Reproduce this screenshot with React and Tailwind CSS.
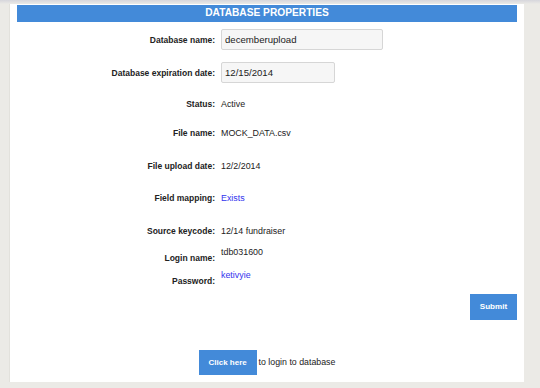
import React from 'react';

const rows = [
  { label: 'Status:', value: 'Active', mt: 'mt-[15px]' },
  { label: 'File name:', value: 'MOCK_DATA.csv', mt: 'mt-[17px]' },
  { label: 'File upload date:', value: '12/2/2014', mt: 'mt-[21px]' },
  { label: 'Field mapping:', value: 'Exists', link: true, mt: 'mt-[20px]' },
  { label: 'Source keycode:', value: '12/14 fundraiser', mt: 'mt-[21px]' },
];

const Label = ({ children, className = '' }) => (
  <div className={`w-[198px] shrink-0 text-right text-[8.5px] font-bold text-[#222] leading-[12px] ${className}`}>
    {children}
  </div>
);

export default function App() {
  return (
    <div className="w-[540px] h-[388px] bg-[#ebeae6] relative overflow-hidden font-['Liberation_Sans',Arial,sans-serif]">
      {/* top shadow strip */}
      <div className="absolute top-0 left-0 right-0 h-[4px] bg-gradient-to-b from-[#d6d6dc] to-[#ebeae6]" />

      <div className="ml-[9px] w-[515px] h-[382px] bg-white border-l border-[#e2e1dc] pt-[5px] px-[7px]">
        {/* Header */}
        <div className="h-[17px] bg-[#438ad9] flex items-center justify-center">
          <span className="text-white font-bold text-[10.2px] leading-none">DATABASE PROPERTIES</span>
        </div>

        {/* Inputs */}
        <div className="flex items-center gap-[6px] mt-[7px]">
          <Label>Database name:</Label>
          <input
            readOnly
            value="decemberupload"
            className="w-[162px] h-[21px] px-[3px] bg-[#f6f6f6] border border-[#d6d6d6] rounded-[2px] text-[9.6px] text-[#222] outline-none"
          />
        </div>
        <div className="flex items-center gap-[6px] mt-[12px]">
          <Label>Database expiration date:</Label>
          <input
            readOnly
            value="12/15/2014"
            className="w-[114px] h-[21px] px-[3px] bg-[#f6f6f6] border border-[#d6d6d6] rounded-[2px] text-[9.6px] text-[#222] outline-none"
          />
        </div>

        {/* Plain rows */}
        {rows.map((r) => (
          <div key={r.label} className={`flex items-center gap-[6px] ${r.mt}`}>
            <Label>{r.label}</Label>
            <span className={`text-[8.9px] leading-[12px] ${r.link ? 'text-[#3333ee]' : 'text-[#222]'}`}>
              {r.value}
            </span>
          </div>
        ))}

        {/* Login */}
        <div className="flex items-start gap-[6px] mt-[9px]">
          <Label className="pt-[6px]">Login name:</Label>
          <span className="text-[8.9px] leading-[12px] text-[#222]">tdb031600</span>
        </div>
        <div className="flex items-start gap-[6px] mt-[5px]">
          <Label className="pt-[6px]">Password:</Label>
          <span className="text-[8.9px] leading-[12px] text-[#3333ee]">ketivyie</span>
        </div>

        <div className="flex justify-end mt-[7px]">
          <button className="w-[47px] h-[26px] bg-[#438ad9] text-white font-bold text-[8.1px]">Submit</button>
        </div>

        <div className="flex items-center justify-center gap-[2px] mt-[30px]">
          <button className="w-[58px] h-[25px] bg-[#438ad9] text-white font-bold text-[8px]">Click here</button>
          <span className="text-[8.8px] text-[#222]">to login to database</span>
        </div>
      </div>
    </div>
  );
}
